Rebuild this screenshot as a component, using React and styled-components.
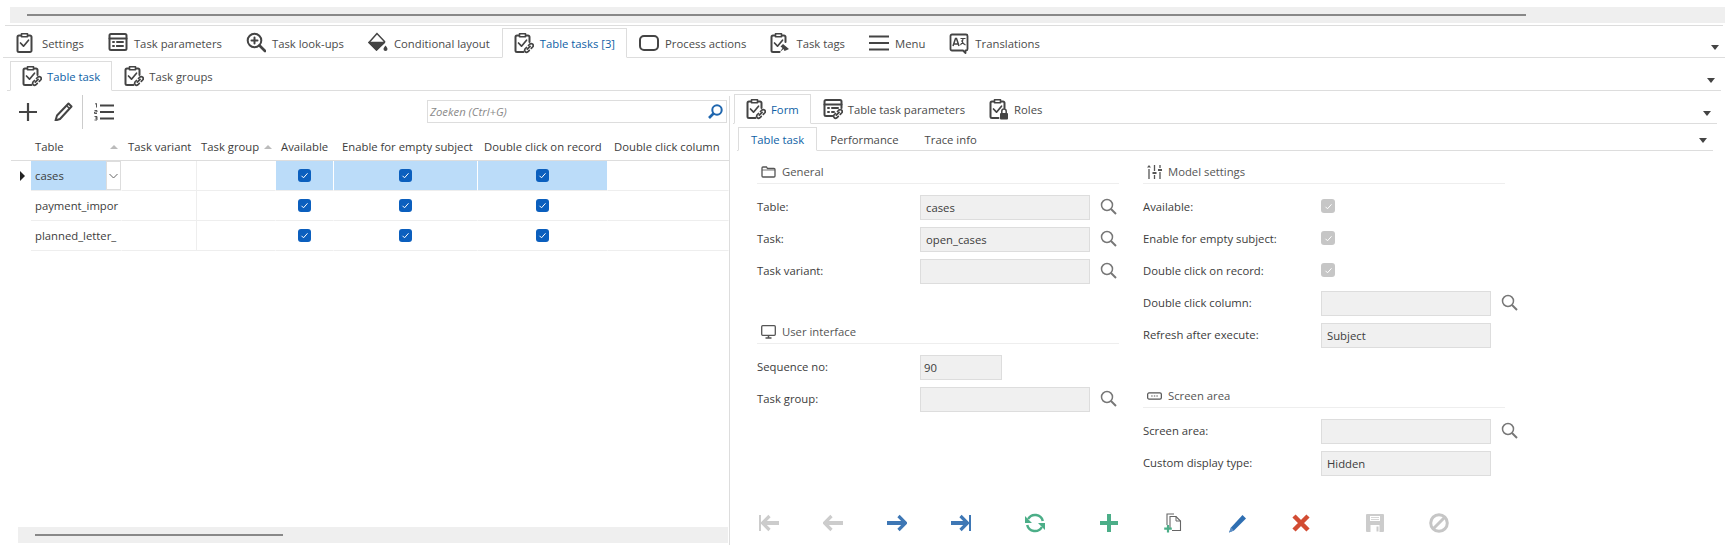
import React from "react"
import styled, { createGlobalStyle } from "styled-components"

const GlobalStyle = createGlobalStyle`
  html, body {
    margin: 0;
    padding: 0;
    background: #fff;
  }
  body {
    font-family: "Open Sans", "Noto Sans", sans-serif;
    font-size: 11.3px;
    color: #3c3c3c;
  }
`

const Svg = ({ w = 20, h = 20, box, children, ...rest }) => (
  <svg width={w} height={h} viewBox={box || `0 0 ${w} ${h}`} fill="none" {...rest}>
    {children}
  </svg>
)

const DARK = "#444"

const Clipboard = ({ badge, color = DARK }) => (
  <Svg w={20} h={22}>
    <g stroke={color} strokeWidth="2" strokeLinecap="round" strokeLinejoin="round">
      {badge ? (
        <path d="M5 3.500H3a1.500 1.500 0 0 0-1.500 1.500v13.500A1.500 1.500 0 0 0 3 20h6.500M12 3.500h2A1.500 1.500 0 0 1 15.500 5v5" />
      ) : (
        <path d="M5 3.500H3a1.500 1.500 0 0 0-1.500 1.500v13.500A1.500 1.500 0 0 0 3 20h11a1.500 1.500 0 0 0 1.500-1.500V5A1.500 1.500 0 0 0 14 3.500h-2" />
      )}
      <path d="M5.500 1.800h6v3h-6z" strokeWidth="1.600" />
      <path d="M4.500 11l3 3.200 5-6" strokeWidth="1.700" />
    </g>
    {badge === "link" && <Chain color={color} />}
    {badge === "pin" && <path d="M13 12l6 5-2 1-2.500 1-1-2-3.500 3 2.500-4-2-1.500 1-1z" fill={color} />}
    {badge === "lock" && (
      <g>
        <rect x="11" y="15" width="8" height="6.500" rx="1" fill={color} />
        <path d="M12.800 15v-1.800a2.200 2.200 0 0 1 4.400 0V15" stroke={color} strokeWidth="1.500" />
      </g>
    )}
  </Svg>
)

const Chain = ({ color = DARK }) => (
  <g stroke={color} strokeWidth="1.700" strokeLinecap="round">
    <path d="M14.500 13.500l1.500-1.500a2 2 0 0 1 2.800 2.800l-1.500 1.500" />
    <path d="M12.500 15.500L11 17a2 2 0 0 0 2.800 2.800l1.500-1.500" />
    <path d="M13.300 17.200l2.800-2.800" />
  </g>
)

const ParamsIcon = ({ badge }) => (
  <Svg w={20} h={22}>
    <g stroke={DARK} strokeWidth="2" strokeLinecap="round" strokeLinejoin="round">
      <path d={badge ? "M9.500 18H3a1.500 1.500 0 0 1-1.500-1.500v-13A1.500 1.500 0 0 1 3 2h14a1.500 1.500 0 0 1 1.500 1.500V10" : "M3 2h14a1.500 1.500 0 0 1 1.500 1.500v13A1.500 1.500 0 0 1 17 18H3a1.500 1.500 0 0 1-1.500-1.500v-13A1.500 1.500 0 0 1 3 2z"} />
      <path d="M1.500 6.500h17" />
      <path d="M5 10h1M5 14h1M9 10h6M9 14h2" />
      {!badge && <path d="M9 14h6" />}
    </g>
    {badge && <Chain />}
  </Svg>
)

const LookupIcon = () => (
  <Svg w={20} h={22}>
    <g stroke={DARK} strokeWidth="2" strokeLinecap="round">
      <circle cx="8.500" cy="8.500" r="6.800" />
      <path d="M13.500 13.500l5.500 5.500" strokeWidth="2.600" />
      <path d="M8.500 5.500v6M5.500 8.500h6" />
    </g>
  </Svg>
)

const BucketIcon = () => (
  <Svg w={20} h={22}>
    <path d="M9 1.500L1 10.500l7.500 7.500 8-8.500z" fill="#fff" stroke={DARK} strokeWidth="1.500" />
    <path d="M1 10.500h15.500l-8 7.500z" fill={DARK} stroke={DARK} strokeWidth="1.500" strokeLinejoin="round" />
    <path d="M17.500 13.500c1.500 2 2 2.700 2 3.500a2 2 0 0 1-4 0c0-.8.500-1.500 2-3.500z" fill={DARK} />
  </Svg>
)

const ProcessIcon = () => (
  <Svg w={20} h={22}>
    <rect x="1" y="4" width="18" height="14" rx="4" stroke={DARK} strokeWidth="2" />
  </Svg>
)

const MenuIcon = () => (
  <Svg w={20} h={22}>
    <path d="M0 4.500h20M0 11h20M0 17.500h20" stroke={DARK} strokeWidth="2" />
  </Svg>
)

const TranslateIcon = () => (
  <Svg w={20} h={22}>
    <path d="M3 2.500h14a1.500 1.500 0 0 1 1.500 1.500v13a1.500 1.500 0 0 1-1.500 1.500h-.5v2.500l-2.500-2.500H3A1.500 1.500 0 0 1 1.500 17V4A1.500 1.500 0 0 1 3 2.500z" stroke={DARK} strokeWidth="1.800" strokeLinejoin="round" />
    <path d="M4 14l2.500-7.500h1L10 14M5 12h4" stroke={DARK} strokeWidth="1.500" />
    <path d="M11.500 6.500h5M14 6.500c0 3-1 5-2.500 6.500M12.500 8.500c.8 2 2 3.500 4 4.500" stroke={DARK} strokeWidth="1.200" />
  </Svg>
)

const PlusIcon = () => (
  <Svg w={18} h={18}>
    <path d="M9 0v18M0 9h18" stroke={DARK} strokeWidth="2.200" />
  </Svg>
)

const PencilOutline = () => (
  <Svg w={19} h={19}>
    <path d="M14.500 1.500l3 3L6 17l-4.500 1.500L3 13.500z" stroke={DARK} strokeWidth="2" strokeLinejoin="round" />
    <path d="M12.500 3.500l3 3" stroke={DARK} strokeWidth="1.500" />
  </Svg>
)

const NumberedList = () => (
  <Svg w={20} h={18}>
    <path d="M6 2.500h14M6 9h14M6 15.500h14" stroke={DARK} strokeWidth="2" />
    <path d="M1 1l1.500-.5v4M.5 7.500h2.500v1.500H.5v1.500H3M.5 13.500H3v1.500H1.500 3V17H.5" stroke={DARK} strokeWidth=".9" />
  </Svg>
)

const BlueSearch = () => (
  <Svg w={15} h={15}>
    <circle cx="9" cy="6" r="4.700" stroke="#1f66ae" strokeWidth="2" />
    <path d="M5.500 9.500L1 14" stroke="#1f66ae" strokeWidth="2.600" />
  </Svg>
)

const GraySearch = () => (
  <Svg w={17} h={17}>
    <circle cx="7" cy="7" r="5.500" stroke="#777" strokeWidth="1.500" />
    <path d="M11 11l5 5" stroke="#777" strokeWidth="1.900" />
  </Svg>
)

const FolderIcon = () => (
  <Svg w={15} h={12}>
    <path d="M1 2a1 1 0 0 1 1-1h3.500l1 1.500H13a1 1 0 0 1 1 1V10a1 1 0 0 1-1 1H2a1 1 0 0 1-1-1z" stroke="#555" strokeWidth="1.300" />
    <path d="M1 4h13" stroke="#555" strokeWidth=".8" />
  </Svg>
)

const MonitorIcon = () => (
  <Svg w={15} h={14}>
    <rect x=".7" y=".7" width="13.600" height="9.600" rx="1" stroke="#555" strokeWidth="1.300" />
    <path d="M7.500 10.500v2M4.500 13h6" stroke="#555" strokeWidth="1.500" />
  </Svg>
)

const SlidersIcon = () => (
  <Svg w={15} h={14}>
    <path d="M2 4v10M7.500 0v6M7.500 10v4M13 0v3M13 7v7" stroke="#555" strokeWidth="1.300" />
    <path d="M0 2.500h4L2 0zM5.500 7h4v2h-4zM11 4h4v2h-4z" fill="#555" />
  </Svg>
)

const AreaIcon = () => (
  <Svg w={16} h={8}>
    <rect x=".7" y=".7" width="14.600" height="6.600" rx="1.500" stroke="#555" strokeWidth="1.300" />
    <path d="M4.500 4h1.500M7.300 4h1.500M10 4h1.500" stroke="#555" strokeWidth="1.300" />
  </Svg>
)

const StepIcon = ({ color, dir, bar }) => (
  <Svg w={20} h={18} style={dir === "left" ? { transform: "scaleX(-1)" } : undefined}>
    <path d={bar ? "M0 9h17" : "M0 9h19"} stroke={color} strokeWidth="4" />
    <path d={bar ? "M9.500 2l7 7-7 7" : "M11.500 2l7 7-7 7"} stroke={color} strokeWidth="3.200" />
    {bar && <path d="M19 1v16" stroke={color} strokeWidth="2" />}
  </Svg>
)

const RefreshIcon = () => (
  <Svg w={20} h={20}>
    <g stroke="#4cae88" strokeWidth="2.500">
      <path d="M17.800 8A8 8 0 0 0 3.100 6" />
      <path d="M2.200 12A8 8 0 0 0 16.900 14" />
    </g>
    <path d="M0 3v7h7zM20 17v-7h-7z" fill="#4cae88" />
  </Svg>
)

const GreenPlus = () => (
  <Svg w={18} h={18}>
    <path d="M9 0v18M0 9h18" stroke="#4cae88" strokeWidth="4" />
  </Svg>
)

const CopyIcon = () => (
  <Svg w={18} h={20}>
    <path d="M3 12V1h7M6 15V3.500h6l4.500 4.500v9.500H8" stroke="#666" strokeWidth="1.100" />
    <path d="M12 3.500V8h4.500" stroke="#666" strokeWidth="1" />
    <path d="M4 12v7.500M.2 15.700h7.600" stroke="#4cae88" strokeWidth="2.200" />
  </Svg>
)

const BluePencil = () => (
  <Svg w={19} h={19}>
    <path d="M14.500 1l3.500 3.500L6 16.500 1 18.500l2-5z" fill="#2f6fb2" />
    <path d="M1 18.500l2-5 3 3z" fill="#5f8fc4" />
  </Svg>
)

const RedCross = () => (
  <Svg w={18} h={18}>
    <path d="M2 2l14 14M16 2L2 16" stroke="#d24c33" strokeWidth="4.500" />
  </Svg>
)

const SaveIcon = () => (
  <Svg w={18} h={18}>
    <path d="M0 1a1 1 0 0 1 1-1h16a1 1 0 0 1 1 1v16a1 1 0 0 1-1 1H1a1 1 0 0 1-1-1z" fill="#ccc" />
    <path d="M4 2h10v5H4z" fill="#fff" />
    <path d="M4.500 11h9v7h-9z" fill="#fff" />
    <path d="M10.500 12.500h2v5h-2z" fill="#ccc" />
    <path d="M5 3.500h8M5 5.500h8" stroke="#ccc" strokeWidth=".8" />
  </Svg>
)

const BanIcon = () => (
  <Svg w={20} h={20}>
    <circle cx="10" cy="10" r="8.300" stroke="#c6c6c6" strokeWidth="3" />
    <path d="M4.500 15.500l11-11" stroke="#c6c6c6" strokeWidth="3" />
  </Svg>
)

const Check = () => (
  <svg width="9" height="9" viewBox="0 0 9 9" fill="none">
    <path d="M1.500 4.800l2 2 4-4.500" stroke="#fff" strokeWidth="1" />
  </svg>
)

const Chevron = () => (
  <svg width="9" height="6" viewBox="0 0 9 6" fill="none">
    <path d="M.5 1l4 4 4-4" stroke="#666" strokeWidth="1" />
  </svg>
)

const Page = styled.div`
  width: 1735px;
  height: 557px;
  padding-top: 7px;
  box-sizing: border-box;
  overflow: hidden;
`

const ScrollTrack = styled.div`
  height: 16px;
  background: #efefef;
  display: flex;
  align-items: center;
  margin: ${(p) => p.$margin};
  padding-left: 17px;
`

const ScrollThumb = styled.div`
  height: 2px;
  width: ${(p) => p.$width}px;
  background: #888;
`

const Rule = styled.div`
  height: 1px;
  margin: 2px 12px 0 5px;
  background: #ddd;
`

const TabBar = styled.div`
  display: flex;
  align-items: flex-end;
  height: ${(p) => p.$height}px;
  box-sizing: border-box;
  margin: ${(p) => p.$margin};
  padding-left: ${(p) => p.$pad}px;
  border-bottom: 1px solid #ddd;
`

const Tab = styled.div`
  display: flex;
  align-items: center;
  gap: ${(p) => p.$gap ?? 6}px;
  height: ${(p) => p.$height ?? 30}px;
  box-sizing: border-box;
  padding: 0 ${(p) => p.$pad ?? 11}px;
  margin-bottom: -1px;
  white-space: nowrap;
  color: ${(p) => (p.$active ? "#0f5fa6" : "#4a4a4a")};
  background: ${(p) => (p.$active ? "#fff" : "transparent")};
  border: 1px solid ${(p) => (p.$active ? "#ddd" : "transparent")};
  border-bottom: 1px solid ${(p) => (p.$active ? "#fff" : "transparent")};
`

const MoreArrow = styled.div`
  margin-left: auto;
  margin-right: ${(p) => p.$right}px;
  margin-bottom: 7px;
  width: 0;
  height: 0;
  border-left: 4px solid transparent;
  border-right: 4px solid transparent;
  border-top: 5px solid #444;
`

const Split = styled.div`
  display: flex;
  height: 454px;
`

const LeftPane = styled.div`
  width: 718px;
  margin-left: 11px;
  display: flex;
  flex-direction: column;
  flex: none;
`

const Splitter = styled.div`
  width: 1px;
  margin-top: 5px;
  background: #ddd;
  flex: none;
`

const RightPane = styled.div`
  flex: 1;
  min-width: 0;
  display: flex;
  flex-direction: column;
`

const Toolbar = styled.div`
  display: flex;
  align-items: center;
  height: 44px;
  box-sizing: border-box;
  padding: 0 2px 3px 8px;
  flex: none;
`

const ToolButton = styled.div`
  display: flex;
  margin-left: ${(p) => p.$left ?? 0}px;
`

const ToolDivider = styled.div`
  width: 1px;
  height: 34px;
  background: #ccc;
  margin: 0 11px 0 9px;
`

const SearchBox = styled.div`
  margin-left: auto;
  width: 300px;
  height: 23px;
  box-sizing: border-box;
  border: 1px solid #ddd;
  display: flex;
  align-items: center;
  justify-content: space-between;
  padding: 0 3px 0 2px;
  font-style: italic;
  color: #8a8a8a;
`

const Grid = styled.div`
  flex: 1;
`

const HeaderRow = styled.div`
  display: grid;
  grid-template-columns: 20px 91px 75px 79px 58px 144px 130px 121px;
  height: 26px;
  box-sizing: border-box;
  padding-bottom: 2px;
  border-bottom: 1px solid #ddd;
  align-items: center;
`

const HeaderCell = styled.div`
  display: flex;
  align-items: center;
  justify-content: ${(p) => (p.$sort ? "space-between" : "flex-start")};
  padding-left: ${(p) => p.$pad ?? 4}px;
  padding-right: ${(p) => (p.$sort ? 4 : 0)}px;
  white-space: nowrap;
  overflow: hidden;
  color: #3c3c3c;
`

const SortMark = styled.span`
  width: 0;
  height: 0;
  border-left: 4px solid transparent;
  border-right: 4px solid transparent;
  border-bottom: 4px solid #bbb;
`

const DataRow = styled.div`
  display: grid;
  grid-template-columns: 20px 91px 75px 79px 58px 144px 130px 121px;
  height: 30px;
`

const Gutter = styled.div`
  display: flex;
  align-items: center;
  padding-left: 9px;
`

const RowMark = styled.span`
  width: 0;
  height: 0;
  border-top: 5px solid transparent;
  border-bottom: 5px solid transparent;
  border-left: 5px solid #222;
`

const Cell = styled.div`
  display: flex;
  align-items: center;
  justify-content: ${(p) => (p.$center ? "center" : "flex-start")};
  padding-left: ${(p) => (p.$center ? 0 : 4)}px;
  padding-bottom: ${(p) => (p.$center ? 0 : 1)}px;
  box-sizing: border-box;
  overflow: hidden;
  white-space: nowrap;
  position: relative;
  background: ${(p) => (p.$selected ? "#bbdcf9" : "transparent")};
  border-bottom: 1px solid #eee;
  border-right: 1px solid ${(p) => (p.$selected ? "#fff" : p.$line ? "#eee" : "transparent")};
`

const ComboButton = styled.div`
  position: absolute;
  right: 0;
  top: 0;
  bottom: 0;
  width: 15px;
  background: #fff;
  border: 1px solid #ddd;
  box-sizing: border-box;
  display: flex;
  align-items: center;
  justify-content: center;
`

const CheckBox = styled.span`
  display: flex;
  align-items: center;
  justify-content: center;
  flex: none;
  width: ${(p) => (p.$disabled ? 14 : 13)}px;
  height: ${(p) => (p.$disabled ? 14 : 13)}px;
  margin-top: ${(p) => (p.$disabled ? -3 : -1)}px;
  border-radius: 3px;
  background: ${(p) => (p.$disabled ? "#c6c6c6" : "#0b5fbe")};
`

const FormArea = styled.div`
  display: grid;
  grid-template-columns: 362px 362px;
  column-gap: 24px;
  padding: 10px 0 0 27px;
  flex: none;
`

const FormColumn = styled.div`
  display: flex;
  flex-direction: column;
`

const SectionHead = styled.div`
  display: flex;
  align-items: center;
  gap: 6px;
  height: 21px;
  padding-bottom: 1px;
  box-sizing: content-box;
  border-bottom: 1px solid #eee;
  margin-top: ${(p) => p.$top ?? 0}px;
  margin-bottom: 11px;
  padding-left: 4px;
  color: #555;
`

const SectionIcon = styled.span`
  display: flex;
  width: 15px;
  justify-content: center;
`

const FieldRow = styled.div`
  display: flex;
  align-items: center;
  height: 25px;
  margin-bottom: 7px;
`

const FieldLabel = styled.div`
  width: ${(p) => p.$width}px;
  flex: none;
  padding-bottom: 2px;
  color: #3c3c3c;
`

const FieldInput = styled.div`
  width: ${(p) => p.$width ?? 170}px;
  height: 25px;
  flex: none;
  box-sizing: border-box;
  background: #f0f0f0;
  border: 1px solid #ddd;
  padding-left: ${(p) => p.$pad ?? 5}px;
  display: flex;
  align-items: center;
`

const LookupButton = styled.span`
  display: flex;
  flex: none;
  margin-left: 10px;
  margin-top: -2px;
`

const ActionBar = styled.div`
  display: flex;
  align-items: center;
  height: 20px;
  padding-left: 7px;
  margin-top: 30px;
  flex: none;
`

const ActionButton = styled.div`
  width: 64px;
  display: flex;
  justify-content: center;
  flex: none;
  margin-left: ${(p) => (p.$group ? 10 : 0)}px;
`

const mainTabs = [
  { label: "Settings", icon: <Clipboard /> },
  { label: "Task parameters", icon: <ParamsIcon /> },
  { label: "Task look-ups", icon: <LookupIcon /> },
  { label: "Conditional layout", icon: <BucketIcon /> },
  { label: "Table tasks [3]", icon: <Clipboard badge="link" />, active: true },
  { label: "Process actions", icon: <ProcessIcon /> },
  { label: "Task tags", icon: <Clipboard badge="pin" /> },
  { label: "Menu", icon: <MenuIcon /> },
  { label: "Translations", icon: <TranslateIcon /> },
]

const subTabs = [
  { label: "Table task", icon: <Clipboard badge="link" />, active: true },
  { label: "Task groups", icon: <Clipboard badge="link" /> },
]

const formTabs = [
  { label: "Form", icon: <Clipboard badge="link" />, active: true },
  { label: "Table task parameters", icon: <ParamsIcon badge /> },
  { label: "Roles", icon: <Clipboard badge="lock" /> },
]

const rows = ["cases", "payment_impor", "planned_letter_"]

const Tabs = ({ items, gap }) =>
  items.map((t) => (
    <Tab key={t.label} $active={t.active} $gap={gap}>
      {t.icon}
      <span>{t.label}</span>
    </Tab>
  ))

const Field = ({ label, labelWidth, value, width, pad, lookup }) => (
  <FieldRow>
    <FieldLabel $width={labelWidth}>{label}</FieldLabel>
    <FieldInput $width={width} $pad={pad}>{value}</FieldInput>
    {lookup && (
      <LookupButton>
        <GraySearch />
      </LookupButton>
    )}
  </FieldRow>
)

const CheckField = ({ label }) => (
  <FieldRow>
    <FieldLabel $width={178}>{label}</FieldLabel>
    <CheckBox $disabled>
      <Check />
    </CheckBox>
  </FieldRow>
)

const App = () => {
  return (
    <Page>
      <GlobalStyle />
      <ScrollTrack $margin="0 10px 0 10px">
        <ScrollThumb $width={1499} />
      </ScrollTrack>
      <Rule />
      <TabBar $height={32} $margin="0 10px 0 3px" $pad={1}>
        <Tabs items={mainTabs} />
        <MoreArrow $right={6} />
      </TabBar>
      <TabBar $height={33} $margin="0 14px 0 7px" $pad={3}>
        <Tabs items={subTabs} gap={5} />
        <MoreArrow $right={6} />
      </TabBar>

      <Split>
        <LeftPane>
          <Toolbar>
            <ToolButton><PlusIcon /></ToolButton>
            <ToolButton $left={17}><PencilOutline /></ToolButton>
            <ToolDivider />
            <ToolButton><NumberedList /></ToolButton>
            <SearchBox>
              <span>Zoeken (Ctrl+G)</span>
              <BlueSearch />
            </SearchBox>
          </Toolbar>
          <Grid>
            <HeaderRow>
              <span />
              <HeaderCell $sort>Table<SortMark /></HeaderCell>
              <HeaderCell $pad={6}>Task variant</HeaderCell>
              <HeaderCell $sort>Task group<SortMark /></HeaderCell>
              <HeaderCell $pad={5}>Available</HeaderCell>
              <HeaderCell $pad={8}>Enable for empty subject</HeaderCell>
              <HeaderCell $pad={6}>Double click on record</HeaderCell>
              <HeaderCell $pad={6}>Double click column</HeaderCell>
            </HeaderRow>
            {rows.map((name, i) => (
              <DataRow key={name}>
                <Gutter>{i === 0 && <RowMark />}</Gutter>
                <Cell $selected={i === 0}>
                  {name}
                  {i === 0 && (
                    <ComboButton>
                      <Chevron />
                    </ComboButton>
                  )}
                </Cell>
                <Cell $line />
                <Cell />
                {[0, 1, 2].map((c) => (
                  <Cell key={c} $center $selected={i === 0}>
                    <CheckBox>
                      <Check />
                    </CheckBox>
                  </Cell>
                ))}
                <Cell />
              </DataRow>
            ))}
          </Grid>
          <ScrollTrack $margin="0 1px 2px 7px">
            <ScrollThumb $width={248} />
          </ScrollTrack>
        </LeftPane>
        <Splitter />
        <RightPane>
          <TabBar $height={33} $margin="0 18px 0 3px" $pad={1}>
            <Tabs items={formTabs} gap={5} />
            <MoreArrow $right={6} />
          </TabBar>
          <TabBar $height={27} $margin="0 22px 0 7px" $pad={1}>
            {["Table task", "Performance", "Trace info"].map((t, i) => (
              <Tab key={t} $active={i === 0} $height={24} $pad={12}>
                {t}
              </Tab>
            ))}
            <MoreArrow $right={6} />
          </TabBar>
          <FormArea>
            <FormColumn>
              <SectionHead>
                <SectionIcon><FolderIcon /></SectionIcon>
                General
              </SectionHead>
              <Field label="Table:" labelWidth={163} value="cases" lookup />
              <Field label="Task:" labelWidth={163} value="open_cases" lookup />
              <Field label="Task variant:" labelWidth={163} lookup />
              <SectionHead $top={30}>
                <SectionIcon><MonitorIcon /></SectionIcon>
                User interface
              </SectionHead>
              <Field label="Sequence no:" labelWidth={163} value="90" width={82} pad={3} />
              <Field label="Task group:" labelWidth={163} lookup />
            </FormColumn>
            <FormColumn>
              <SectionHead>
                <SectionIcon><SlidersIcon /></SectionIcon>
                Model settings
              </SectionHead>
              <CheckField label="Available:" />
              <CheckField label="Enable for empty subject:" />
              <CheckField label="Double click on record:" />
              <Field label="Double click column:" labelWidth={178} lookup />
              <Field label="Refresh after execute:" labelWidth={178} value="Subject" />
              <SectionHead $top={30}>
                <SectionIcon><AreaIcon /></SectionIcon>
                Screen area
              </SectionHead>
              <Field label="Screen area:" labelWidth={178} lookup />
              <Field label="Custom display type:" labelWidth={178} value="Hidden" />
            </FormColumn>
          </FormArea>
          <ActionBar>
            <ActionButton><StepIcon color="#ccc" dir="left" bar /></ActionButton>
            <ActionButton><StepIcon color="#ccc" dir="left" /></ActionButton>
            <ActionButton><StepIcon color="#3e77b5" /></ActionButton>
            <ActionButton><StepIcon color="#3e77b5" bar /></ActionButton>
            <ActionButton $group><RefreshIcon /></ActionButton>
            <ActionButton $group><GreenPlus /></ActionButton>
            <ActionButton><CopyIcon /></ActionButton>
            <ActionButton><BluePencil /></ActionButton>
            <ActionButton><RedCross /></ActionButton>
            <ActionButton $group><SaveIcon /></ActionButton>
            <ActionButton><BanIcon /></ActionButton>
          </ActionBar>
        </RightPane>
      </Split>
    </Page>
  )
}

export default App
